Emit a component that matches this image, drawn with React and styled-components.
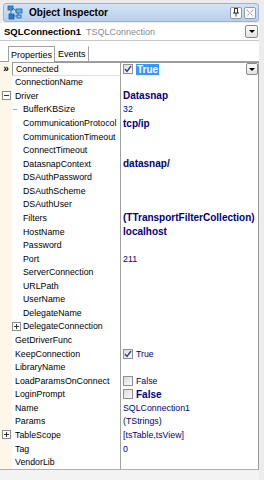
import React from 'react';
import styled, { createGlobalStyle } from 'styled-components';

const ROW_H = 13.57;

const Global = createGlobalStyle`
  html, body { margin: 0; padding: 0; background: #ececec; }
  body { font-family: "Liberation Sans", Arial, sans-serif; }
`;

const Frame = styled.div`
  width: 264px;
  height: 480px;
  box-sizing: border-box;
  padding: 3px 5px 0 0;
  background: #ececec;
  display: flex;
  flex-direction: column;
  overflow: hidden;
`;

const TitleBar = styled.div`
  height: 19px;
  margin-left: 3px;
  box-sizing: border-box;
  border: 1px solid #9cb4d2;
  border-radius: 3px;
  background: linear-gradient(#d3e3f5, #b8cfea);
  display: flex;
  align-items: center;
  padding: 0 2px 0 3px;
`;

const Title = styled.div`
  flex: 1;
  font-weight: bold;
  font-size: 10px;
  color: #000;
  margin-left: 6px;
`;

const TitleBtn = styled.div`
  width: 12px;
  height: 12px;
  margin-left: 2px;
  box-sizing: border-box;
  border: 1px solid #8d9bb0;
  border-radius: 2px;
  background: #fafbfd;
  display: flex;
  align-items: center;
  justify-content: center;
`;

const Selector = styled.div`
  height: 18px;
  margin-top: 1px;
  box-sizing: border-box;
  background: #fff;
  border-bottom: 1px solid #c8c8c8;
  display: flex;
  align-items: center;
  padding-left: 4px;
  padding-right: 1px;
`;

const CompName = styled.span`
  font-weight: bold;
  font-size: 9.5px;
  color: #000;
`;

const CompType = styled.span`
  font-size: 9px;
  color: #8a8a8a;
  margin-left: 5px;
  flex: 1;
`;

const DropBtn = styled.div`
  width: ${p => p.$w || 13}px;
  height: ${p => p.$h || 13}px;
  box-sizing: border-box;
  border: 1px solid #8a8a8a;
  border-radius: 2px;
  background: linear-gradient(#fdfdfd, #e2e2e2);
  display: flex;
  align-items: center;
  justify-content: center;
  flex: none;
  &::after {
    content: '';
    border-left: 3px solid transparent;
    border-right: 3px solid transparent;
    border-top: 3px solid #000;
  }
`;

const TabRow = styled.div`
  height: 21px;
  box-sizing: border-box;
  background: #fff;
  display: flex;
  align-items: flex-end;
  padding-left: 8px;
  border-bottom: 1px solid #a0a0a0;
`;

const Tab = styled.div`
  height: ${p => (p.$active ? 16 : 15)}px;
  box-sizing: border-box;
  padding: 0 2px;
  font-size: 9px;
  color: #000;
  display: flex;
  align-items: center;
  border: 1px solid ${p => (p.$active ? '#a0a0a0' : 'transparent')};
  border-bottom: none;
  border-right: 1px solid #a0a0a0;
  background: #fff;
  margin-bottom: ${p => (p.$active ? -1 : 0)}px;
`;

const Grid = styled.div`
  display: flex;
  flex-direction: column;
  background: #fff;
  border-right: 1px solid #9a9a9a;
  border-bottom: 1px solid #b0b0b0;
`;

const Row = styled.div`
  height: ${ROW_H}px;
  display: flex;
  align-items: stretch;
  font-size: 8.8px;
`;

const Gutter = styled.div`
  width: 12px;
  flex-shrink: 0;
  background: #fcf7e8;
  display: flex;
  align-items: center;
  justify-content: center;
  font-size: 10px;
  font-weight: bold;
  color: #000;
`;

const Indent = styled.div`
  width: 10px;
  flex-shrink: 0;
  border-left: 1px solid #a8a8a8;
  box-sizing: border-box;
  display: flex;
  align-items: center;
  position: relative;
  ${p => p.$first && `
    &::before {
      content: '';
      position: absolute;
      left: 0;
      top: 0;
      width: 4px;
      border-top: 1px solid #a8a8a8;
    }
  `}
`;

const NameCell = styled.div`
  width: 109px;
  flex-shrink: 0;
  box-sizing: border-box;
  display: flex;
  align-items: center;
  color: #000;
  white-space: nowrap;
  overflow: hidden;
  padding-left: ${p => (p.$level ? 0 : 3)}px;
  border-right: 1px solid #a0a0a0;
  ${p => p.$selected && `
    border-top: 1px solid #9a9a9a;
    border-bottom: 1px solid #e0e0e0;
    border-left: 1px solid #9a9a9a;
  `}
`;

const NameText = styled.span`
  padding-left: ${p => (p.$level ? 1 : 0)}px;
`;

const ValueCell = styled.div`
  flex: 1;
  min-width: 0;
  display: flex;
  align-items: center;
  padding-left: 2px;
  color: #000080;
  font-weight: ${p => (p.$bold ? 'bold' : 'normal')};
  font-size: ${p => (p.$bold ? 10 : 8.8)}px;
  white-space: nowrap;
  ${p => p.$selected && `
    border-top: 1px solid #9a9a9a;
  `}
`;

const Selected = styled.span`
  background: #3399ff;
  color: #fff;
  padding: 0 1px;
  flex: none;
`;

const Spacer = styled.span`
  flex: 1;
`;

const Check = styled.span`
  width: 10px;
  height: 10px;
  box-sizing: border-box;
  border: 1px solid #8f8f8f;
  background: linear-gradient(135deg, #dcdcdc, #fafafa);
  margin-right: 3px;
  flex: none;
  display: flex;
  align-items: center;
  justify-content: center;
`;

const ExpandBox = styled.span`
  width: 9px;
  height: 9px;
  box-sizing: border-box;
  border: 1px solid #8c8c8c;
  background: #fff;
  position: relative;
  flex: none;
  margin-left: ${p => p.$shift || 0}px;
  &::before {
    content: '';
    position: absolute;
    left: 1px;
    right: 1px;
    top: 3px;
    height: 1px;
    background: #333;
  }
  ${p => p.$plus && `
    &::after {
      content: '';
      position: absolute;
      top: 1px;
      bottom: 1px;
      left: 3px;
      width: 1px;
      background: #333;
    }
  `}
`;

const Footer = styled.div`
  flex: 1;
  background: #f3f3f3;
`;

const rows = [
  { name: 'Connected', value: 'True', check: true, bold: true, selected: true },
  { name: 'ConnectionName' },
  { name: 'Driver', value: 'Datasnap', bold: true, expand: 'minus' },
  { name: 'BufferKBSize', value: '32', level: 1, first: true },
  { name: 'CommunicationProtocol', value: 'tcp/ip', bold: true, level: 1 },
  { name: 'CommunicationTimeout', level: 1 },
  { name: 'ConnectTimeout', level: 1 },
  { name: 'DatasnapContext', value: 'datasnap/', bold: true, level: 1 },
  { name: 'DSAuthPassword', level: 1 },
  { name: 'DSAuthScheme', level: 1 },
  { name: 'DSAuthUser', level: 1 },
  { name: 'Filters', value: '(TTransportFilterCollection)', bold: true, level: 1 },
  { name: 'HostName', value: 'localhost', bold: true, level: 1 },
  { name: 'Password', level: 1 },
  { name: 'Port', value: '211', level: 1 },
  { name: 'ServerConnection', level: 1 },
  { name: 'URLPath', level: 1 },
  { name: 'UserName', level: 1 },
  { name: 'DelegateName', level: 1 },
  { name: 'DelegateConnection', level: 1, expand: 'plus' },
  { name: 'GetDriverFunc' },
  { name: 'KeepConnection', value: 'True', check: true },
  { name: 'LibraryName' },
  { name: 'LoadParamsOnConnect', value: 'False', check: false },
  { name: 'LoginPrompt', value: 'False', check: false, bold: true },
  { name: 'Name', value: 'SQLConnection1' },
  { name: 'Params', value: '(TStrings)' },
  { name: 'TableScope', value: '[tsTable,tsView]', expand: 'plus' },
  { name: 'Tag', value: '0' },
  { name: 'VendorLib' },
];

const InspectorIcon = () => (
  <svg width="16" height="15" viewBox="0 0 16 15">
    <rect x="1" y="1" width="5" height="4" fill="#3a8fd6" stroke="#1d5f9e" strokeWidth="0.8" />
    <rect x="9" y="4" width="6" height="4" fill="#5ab0e8" stroke="#1d5f9e" strokeWidth="0.8" />
    <rect x="2" y="9" width="5" height="5" fill="#2c7cc4" stroke="#1d5f9e" strokeWidth="0.8" />
    <path d="M4 5 L4 9 M6 3 L9 6 M7 11 L11 11 L11 8" stroke="#2a6ead" strokeWidth="1" fill="none" />
    <rect x="10" y="10" width="4" height="3" fill="#7cc7f0" stroke="#1d5f9e" strokeWidth="0.8" />
  </svg>
);

const PinIcon = () => (
  <svg width="8" height="9" viewBox="0 0 8 9">
    <path d="M2 0.5 H6 M2.5 0.5 V5 M5.5 0.5 V5 M1 5 H7 M4 5 V8.5" stroke="#333" strokeWidth="1" fill="none" />
  </svg>
);

const CloseIcon = () => (
  <svg width="8" height="8" viewBox="0 0 8 8">
    <path d="M1 1 L7 7 M7 1 L1 7" stroke="#9a9a9a" strokeWidth="1.2" strokeDasharray="1 1" fill="none" />
  </svg>
);

const CheckMark = () => (
  <svg width="8" height="8" viewBox="0 0 8 8">
    <path d="M1 4 L3 6.5 L7 1" stroke="#2a3a8a" strokeWidth="1.3" fill="none" />
  </svg>
);

const PropertyRow = ({ r }) => (
  <Row>
    <Gutter>
      {r.selected && '»'}
      {r.expand && !r.level && <ExpandBox $plus={r.expand === 'plus'} />}
    </Gutter>
    <NameCell $level={r.level} $selected={r.selected}>
      {r.level ? (
        <Indent $first={r.first}>
          {r.expand && <ExpandBox $plus={r.expand === 'plus'} $shift={-1} />}
        </Indent>
      ) : null}
      <NameText $level={r.level}>{r.name}</NameText>
    </NameCell>
    <ValueCell $bold={r.bold} $selected={r.selected}>
      {r.check !== undefined && <Check>{r.check && <CheckMark />}</Check>}
      {r.selected ? (
        <>
          <Selected>{r.value}</Selected>
          <Spacer />
          <DropBtn $w={12} $h={12} />
        </>
      ) : (
        r.value
      )}
    </ValueCell>
  </Row>
);

export default function App() {
  return (
    <>
      <Global />
      <Frame>
        <TitleBar>
          <InspectorIcon />
          <Title>Object Inspector</Title>
          <TitleBtn><PinIcon /></TitleBtn>
          <TitleBtn><CloseIcon /></TitleBtn>
        </TitleBar>
        <Selector>
          <CompName>SQLConnection1</CompName>
          <CompType>TSQLConnection</CompType>
          <DropBtn />
        </Selector>
        <TabRow>
          <Tab $active>Properties</Tab>
          <Tab>Events</Tab>
        </TabRow>
        <Grid>
          {rows.map(r => (
            <PropertyRow key={r.name} r={r} />
          ))}
        </Grid>
        <Footer />
      </Frame>
    </>
  );
}
